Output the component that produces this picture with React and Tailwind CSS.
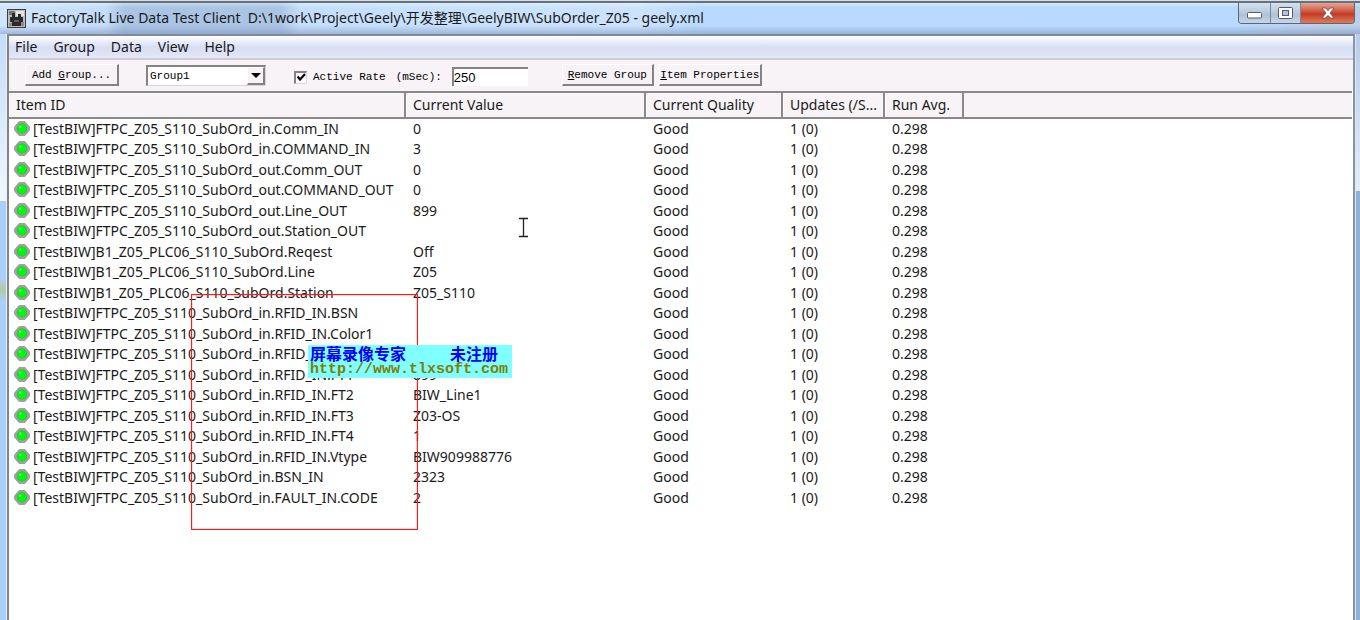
import React from "react";

const MENUS = ["File", "Group", "Data", "View", "Help"];

const ROWS = [
  ["[TestBIW]FTPC_Z05_S110_SubOrd_in.Comm_IN", "0"],
  ["[TestBIW]FTPC_Z05_S110_SubOrd_in.COMMAND_IN", "3"],
  ["[TestBIW]FTPC_Z05_S110_SubOrd_out.Comm_OUT", "0"],
  ["[TestBIW]FTPC_Z05_S110_SubOrd_out.COMMAND_OUT", "0"],
  ["[TestBIW]FTPC_Z05_S110_SubOrd_out.Line_OUT", "899"],
  ["[TestBIW]FTPC_Z05_S110_SubOrd_out.Station_OUT", ""],
  ["[TestBIW]B1_Z05_PLC06_S110_SubOrd.Reqest", "Off"],
  ["[TestBIW]B1_Z05_PLC06_S110_SubOrd.Line", "Z05"],
  ["[TestBIW]B1_Z05_PLC06_S110_SubOrd.Station", "Z05_S110"],
  ["[TestBIW]FTPC_Z05_S110_SubOrd_in.RFID_IN.BSN", ""],
  ["[TestBIW]FTPC_Z05_S110_SubOrd_in.RFID_IN.Color1", ""],
  ["[TestBIW]FTPC_Z05_S110_SubOrd_in.RFID_IN", ""],
  ["[TestBIW]FTPC_Z05_S110_SubOrd_in.RFID_IN.FT1", "899"],
  ["[TestBIW]FTPC_Z05_S110_SubOrd_in.RFID_IN.FT2", "BIW_Line1"],
  ["[TestBIW]FTPC_Z05_S110_SubOrd_in.RFID_IN.FT3", "Z03-OS"],
  ["[TestBIW]FTPC_Z05_S110_SubOrd_in.RFID_IN.FT4", "1"],
  ["[TestBIW]FTPC_Z05_S110_SubOrd_in.RFID_IN.Vtype", "BIW909988776"],
  ["[TestBIW]FTPC_Z05_S110_SubOrd_in.BSN_IN", "2323"],
  ["[TestBIW]FTPC_Z05_S110_SubOrd_in.FAULT_IN.CODE", "2"],
];

const MONO = "font-['Liberation_Mono',monospace] text-[11px] leading-4 text-black";
const RAISED =
  "border-t border-l border-r-2 border-b-2 border-t-white border-l-white border-r-[#858284] border-b-[#858284] bg-[#f6f2f5]";

function AppIcon() {
  return (
    <svg width="19" height="19" viewBox="0 0 19 19" className="shrink-0" aria-hidden="true">
      <rect width="19" height="19" fill="#3c3c3c" />
      <rect x="1" y="1" width="17" height="17" fill="#bdbdbd" />
      <path d="M2 2h6v4H2z" fill="#777" />
      <path d="M9 2h8v5H9z" fill="#e4e4e4" />
      <path d="M5 4h3v4h3V5h3v3h2v5h-2v4H5v-4H3V8h2z" fill="#2a2a2a" />
      <path d="M2 14h3v3H2zM14 13h3v4h-3z" fill="#8c8c8c" />
      <path d="M7 11h5v2H7z" fill="#5e5e5e" />
    </svg>
  );
}

function Led() {
  return (
    <svg width="16" height="16" viewBox="0 0 16 16" className="shrink-0" aria-hidden="true">
      <path d="M5 0.5h6l4.500 5.500v3l-4.500 5.500H5L0.500 9V6z" fill="#a3a0a3" stroke="#a3a0a3" strokeLinejoin="round" />
      <circle cx="8" cy="7.500" r="5" fill="#0bc90f" />
      <circle cx="8" cy="7.500" r="4.500" fill="#00f613" />
      <circle cx="6.200" cy="5.800" r="1.200" fill="#7dfb80" />
    </svg>
  );
}

function TitleBar() {
  return (
    <header className="flex h-[31px] items-start justify-between bg-[linear-gradient(180deg,rgba(255,255,255,0.35)_0,rgba(255,255,255,0)_15%,rgba(120,140,185,0)_72%,rgba(120,140,185,0.5)_100%),linear-gradient(90deg,#cfe5fb_0,#c4ddf8_105px,#aac4e4_125px,#aac4e4_280px,#c4dffb_300px,#cde3fc_640px,#b9dafd_700px,#b9dafd_1240px,#bdd0e8_1320px)] pl-[7px]">
      <div className="flex items-center gap-[5px] pt-[3px]">
        <AppIcon />
        <h1 className="whitespace-pre text-sm leading-6">
          {"FactoryTalk Live Data Test Client  D:\\1work\\Project\\Geely\\开发整理\\GeelyBIW\\SubOrder_Z05 - geely.xml"}
        </h1>
      </div>
      <div className="mr-[5px] flex h-[21px] overflow-hidden rounded-b-[4px] border border-t-0 border-[#5a6678]">
        <button
          aria-label="Minimize"
          className="flex w-8 items-center justify-center border-r border-[#77879d] bg-linear-to-b from-[#d5e2f0] via-[#b2c2d6] via-60% to-[#c6d5e8]"
        >
          <svg width="15" height="7" viewBox="0 0 15 7" className="mt-1">
            <rect x="0.500" y="0.500" width="14" height="5.500" rx="1" fill="#fff" stroke="#525a6b" />
          </svg>
        </button>
        <button
          aria-label="Maximize"
          className="flex w-[30px] items-center justify-center border-r border-[#77879d] bg-linear-to-b from-[#d5e2f0] via-[#b2c2d6] via-60% to-[#c6d5e8]"
        >
          <svg width="15" height="12" viewBox="0 0 15 12">
            <rect x="0.500" y="0.500" width="14" height="11" rx="1" fill="#fff" stroke="#525a6b" />
            <rect x="4.500" y="3.500" width="6" height="5" fill="#b5c4d8" stroke="#525a6b" />
          </svg>
        </button>
        <button
          aria-label="Close"
          className="flex w-[53px] items-center justify-center bg-linear-to-b from-[#e6a595] via-[#c53a20] via-55% to-[#dc7b5c]"
        >
          <svg width="14" height="12" viewBox="0 0 14 12">
            <path
              d="M1 1h3.500L7 3.600 9.500 1H13L9 6l4 5H9.500L7 8.400 4.500 11H1l4-5z"
              fill="#fff"
              stroke="#6d4a4a"
              strokeWidth="0.800"
            />
          </svg>
        </button>
      </div>
    </header>
  );
}

function Toolbar() {
  return (
    <div className={`flex h-[31px] items-start pt-1 pl-4 ${MONO}`}>
      <button className={`h-[22px] w-[94px] whitespace-nowrap ${RAISED}`}>
        Add <u>G</u>roup...
      </button>
      <div className="mt-px ml-[27px] flex h-[21px] w-[120px] border-t-2 border-l-2 border-r border-b border-[#858284] border-r-[#d8d4d8] border-b-[#d8d4d8] bg-white">
        <div className="relative flex w-full">
          <select aria-label="Group" className="w-full appearance-none pl-0.5 outline-none">
            <option>Group1</option>
          </select>
          <span className={`pointer-events-none absolute inset-y-0 right-0 flex w-[18px] items-center justify-center ${RAISED}`}>
            <svg width="10" height="5" viewBox="0 0 10 5">
              <path d="M0 0h10L5 5z" fill="#000" />
            </svg>
          </span>
        </div>
      </div>
      <label className="mt-px ml-7 flex h-6 items-center gap-1.5 whitespace-nowrap">
        <span className="relative flex">
          <input
            type="checkbox"
            defaultChecked
            className="size-[13px] appearance-none border-t-2 border-l-2 border-r border-b border-[#858284] border-r-[#dedade] border-b-[#dedade] bg-white"
          />
          <svg width="9" height="9" viewBox="0 0 9 9" className="pointer-events-none absolute top-[2px] left-[3px]">
            <path d="M0.500 3.500L3 6.500 8 1" fill="none" stroke="#000" strokeWidth="2.200" />
          </svg>
        </span>
        Active Rate
      </label>
      <label htmlFor="rate" className="mt-px ml-2.5 h-6 leading-6">
        (mSec):
      </label>
      <input
        id="rate"
        defaultValue="250"
        className="mt-[3px] ml-2.5 h-[19px] w-[76px] border-t-2 border-l-2 border-[#858284] bg-white font-['Liberation_Sans',sans-serif] text-[13px] outline-none"
      />
      <button className={`ml-[34px] h-[22px] w-[92px] whitespace-nowrap ${RAISED}`}>
        <u>R</u>emove Group
      </button>
      <button className={`ml-[5px] h-[22px] w-[103px] whitespace-nowrap ${RAISED}`}>
        <u>I</u>tem Properties
      </button>
    </div>
  );
}

function HeadCell({ children }) {
  return (
    <th className="border-r-2 border-[#8b888a] bg-[#f7f3f6] p-0 pl-[7px] text-left leading-5 font-normal whitespace-nowrap shadow-[inset_1px_1px_0_#fff]">
      {children}
    </th>
  );
}

function ItemTable() {
  return (
    <table className="w-full table-fixed border-collapse">
      <colgroup>
        <col className="w-[396px]" />
        <col className="w-[240px]" />
        <col className="w-[137px]" />
        <col className="w-[102px]" />
        <col className="w-[79px]" />
        <col />
      </colgroup>
      <thead>
        <tr className="h-[26px] border-y-2 border-[#8b888a]">
          <HeadCell>Item ID</HeadCell>
          <HeadCell>Current Value</HeadCell>
          <HeadCell>Current Quality</HeadCell>
          <HeadCell>Updates (/S...</HeadCell>
          <HeadCell>Run Avg.</HeadCell>
          <td className="bg-[#f7f3f6]" />
        </tr>
      </thead>
      <tbody>
        {ROWS.map(([id, value]) => (
          <tr key={id} className="odd:h-[21px] even:h-5">
            <td className="p-0 pl-[5px]">
              <div className="flex items-center gap-[3px] whitespace-nowrap leading-5">
                <Led />
                {id}
              </div>
            </td>
            <td className="p-0 pl-2 leading-5">{value}</td>
            <td className="p-0 pl-2 leading-5">Good</td>
            <td className="p-0 pl-2 leading-5">1 (0)</td>
            <td className="p-0 pl-2 leading-5">0.298</td>
            <td />
          </tr>
        ))}
      </tbody>
    </table>
  );
}

function RecorderOverlay() {
  return (
    <>
      <svg
        className="pointer-events-none absolute top-[294px] left-[191px]"
        width="227"
        height="236"
        viewBox="0 0 227 236"
        aria-hidden="true"
      >
        <rect x="0.500" y="0.500" width="226" height="235" fill="none" stroke="#ff1a1a" strokeWidth="1.300" />
      </svg>
      <div className="absolute top-[345px] left-[308px] h-[33px] w-[204px] bg-[#7fffff] pl-0.5">
        <div className="flex gap-11 font-['Noto_Sans_CJK_SC',sans-serif] text-base leading-4 font-bold text-[#0000f0]">
          <span>屏幕录像专家</span>
          <span>未注册</span>
        </div>
        <div className="font-['Liberation_Mono',monospace] text-[15px] leading-[17px] font-bold text-[#808000]">
          http://www.tlxsoft.com
        </div>
      </div>
      <svg className="pointer-events-none absolute top-[217px] left-[518px]" width="11" height="21" viewBox="0 0 11 21">
        <path d="M1 1.500h9M5.500 2v17M1 19.500h9" fill="none" stroke="#222" strokeWidth="1.300" />
      </svg>
    </>
  );
}

export default function App() {
  return (
    <div className="relative flex min-h-screen flex-col bg-[#b9dafd] font-['Noto_Sans','Noto_Sans_CJK_SC',sans-serif] text-sm text-[#1a1a1a]">
      <div className="h-[3px] border-b-2 border-[#66727c] bg-[#d5dde5]" />
      <TitleBar />
      <div className="flex flex-1">
        <div className="flex w-[7px] flex-col border-r border-[#e6f0fa]">
          <div className="h-[167px] bg-linear-to-b from-[#c4ddf8] to-[#f0f7ff]" />
          <div className="h-[77px] bg-[#a9d0fa]" />
          <div className="h-6 bg-linear-to-b from-[#a9d0fa] via-[#b4c8a8] to-[#a9d0fa]" />
          <div className="flex-1 bg-[#a9d0fa]" />
        </div>
        <main className="flex flex-1 flex-col border-t-2 border-r-2 border-l-2 border-t-[#7e8a98] border-r-[#8496a4] border-l-[#858284] bg-white">
          <nav className="flex h-[24px] items-center gap-4 border-b-2 border-[#cfcdd0] bg-linear-to-b from-white via-[#d7def3] via-50% to-[#e2e8f8] pl-1.5">
            {MENUS.map((m) => (
              <button key={m}>{m}</button>
            ))}
          </nav>
          <div className="bg-[#f7f3f6]">
            <Toolbar />
          </div>
          <div className="pr-px">
            <ItemTable />
          </div>
        </main>
        <div className="flex w-[5px] flex-col border-l border-[#dbe8f4]">
          <div className="h-[157px] bg-linear-to-b from-[#b8cde8] to-[#e3edf8]" />
          <div className="flex-1 bg-[#8fb1d8]" />
        </div>
      </div>
      <RecorderOverlay />
    </div>
  );
}
